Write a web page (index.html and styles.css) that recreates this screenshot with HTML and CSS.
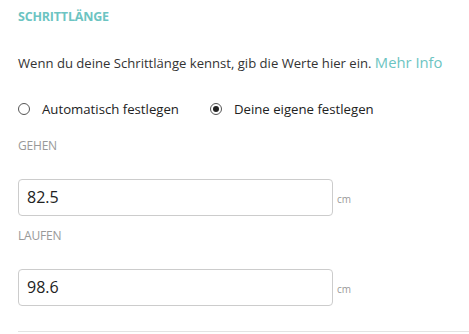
FILE: index.html
```html
<!DOCTYPE html>
<html lang="de">
<head>
<meta charset="utf-8">
<link rel="stylesheet" href="styles.css">
</head>
<body>
<section class="panel">
  <h2 class="title">SCHRITTLÄNGE</h2>
  <p class="intro">Wenn du deine Schrittlänge kennst, gib die Werte hier ein. <a class="more" href="#">Mehr Info</a></p>
  <div class="radios">
    <label class="radio"><span class="dot"></span>Automatisch festlegen</label>
    <label class="radio checked"><span class="dot"></span>Deine eigene festlegen</label>
  </div>
  <div class="field">
    <div class="label">GEHEN</div>
    <div class="row"><div class="input">82.5</div><span class="unit">cm</span></div>
  </div>
  <div class="field">
    <div class="label">LAUFEN</div>
    <div class="row"><div class="input">98.6</div><span class="unit">cm</span></div>
  </div>
  <div class="divider"></div>
</section>
</body>
</html>
```
FILE: styles.css
```css
html, body { margin: 0; padding: 0; background: #fff; }
body { font-family: "Open Sans", "Liberation Sans", sans-serif; color: #333; }
.panel { padding: 9px 0 0 18px; }
.title { margin: 0; font-size: 12.5px; font-weight: 700; color: #6cc4c2; line-height: 16px; letter-spacing: -0.2px; }
.intro { margin: 27px 0 0; font-size: 13.1px; line-height: 20px; color: #333; }
.more { color: #6cc4c2; text-decoration: none; font-size: 14.8px; }
.radios { display: flex; gap: 31px; margin-top: 26px; margin-bottom: 19px; }
.radio { display: flex; align-items: center; font-size: 13.2px; line-height: 20px; color: #222; }
.dot { width: 10px; height: 10px; border: 1px solid #555; border-radius: 50%; margin-right: 12px; box-sizing: content-box; position: relative; }
.checked .dot::after { content: ""; position: absolute; left: 2px; top: 2px; width: 6px; height: 6px; border-radius: 50%; background: #222; }
.field { margin-top: 12px; }
.label { font-size: 12px; color: #999; line-height: 16px; letter-spacing: -0.2px; }
.row { display: flex; align-items: center; margin-top: 25px; }
.input { width: 305px; height: 35px; border: 1px solid #ccc; border-radius: 4px; padding-left: 8px; font-size: 16px; line-height: 35px; color: #222; }
.unit { font-size: 10px; color: #999; margin-left: 4px; margin-top: 2px; }
.divider { margin-top: 25px; height: 1px; background: #e3e3e3; }
```
